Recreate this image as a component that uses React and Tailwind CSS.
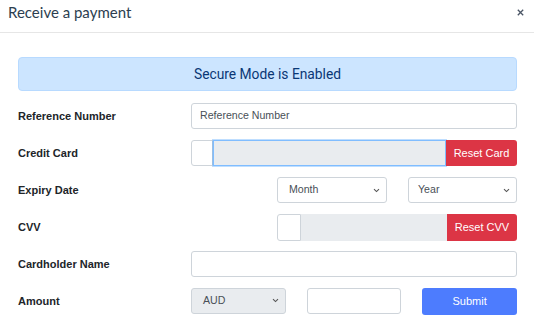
import React from "react";

const Chevron = () => (
  <svg width="7" height="5" viewBox="0 0 7 5" className="shrink-0">
    <path d="M1 1.2 L3.5 3.6 L6 1.2" fill="none" stroke="#555" strokeWidth="1.1" />
  </svg>
);

const Label = ({ children }) => (
  <div className="w-[173px] shrink-0 text-[11px] font-bold text-[#212529]">{children}</div>
);

export default function App() {
  return (
    <div
      className="w-[534px] h-[320px] bg-white overflow-hidden"
      style={{ fontFamily: "'Liberation Sans', Arial, sans-serif" }}
    >
      <div className="h-[33px] border-b border-[#e6e6e6] flex items-center justify-between pl-[8px] pr-[9px] pb-[8px]">
        <div
          className="text-[15px] text-[#2c3e50]"
          style={{ fontFamily: "Lato, 'Liberation Sans', sans-serif" }}
        >
          Receive a payment
        </div>
        <svg width="9" height="9" viewBox="0 0 9 9">
          <path d="M1.8 1.8 L7.2 7.2 M7.2 1.8 L1.8 7.2" stroke="#4a5565" strokeWidth="1.3" />
        </svg>
      </div>

      <div className="pl-[18px] pr-[17px] pt-[24px]">
        <div
          className="h-[34px] rounded-[4px] bg-[#cce5ff] border border-[#b8daff] flex items-center justify-center text-[13.8px] font-normal text-[#0a3775]"
          style={{ fontFamily: "Roboto, 'Liberation Sans', sans-serif" }}
        >
          Secure Mode is Enabled
        </div>

        <div className="mt-[12px] flex flex-col gap-[11px]">
          <div className="flex items-center h-[26px]">
            <Label>Reference Number</Label>
            <div className="flex-1 h-[26px] border border-[#ced4da] rounded-[3px] flex items-center pl-[8px] text-[10.6px] text-[#495057]">
              Reference Number
            </div>
          </div>

          <div className="flex items-center h-[26px]">
            <Label>Credit Card</Label>
            <div className="flex-1 flex h-[26px]">
              <div className="w-[22px] border border-[#ced4da] rounded-l-[3px] bg-white" />
              <div className="flex-1 bg-[#e9ecef] border border-[#80bdff] shadow-[0_0_0_1px_rgba(0,123,255,0.25)]" />
              <div className="w-[71px] bg-[#dc3545] rounded-r-[3px] flex items-center justify-center text-white text-[11px]">
                Reset Card
              </div>
            </div>
          </div>

          <div className="flex items-center h-[26px]">
            <Label>Expiry Date</Label>
            <div className="flex-1 flex justify-end gap-[21px]">
              <div className="w-[110px] h-[26px] border border-[#ced4da] rounded-[3px] flex items-center justify-between pl-[11px] pr-[6px] text-[10.6px] text-[#495057]">
                Month
                <Chevron />
              </div>
              <div className="w-[109px] h-[26px] border border-[#ced4da] rounded-[3px] flex items-center justify-between pl-[9px] pr-[6px] text-[10.6px] text-[#495057]">
                Year
                <Chevron />
              </div>
            </div>
          </div>

          <div className="flex items-center h-[26px]">
            <Label>CVV</Label>
            <div className="flex-1 flex justify-end">
              <div className="w-[240px] flex h-[27px]">
                <div className="w-[24px] border border-[#ced4da] rounded-l-[3px] bg-white" />
                <div className="flex-1 bg-[#e9ecef]" />
                <div className="w-[70px] bg-[#dc3545] rounded-r-[3px] flex items-center justify-center text-white text-[11px]">
                  Reset CVV
                </div>
              </div>
            </div>
          </div>

          <div className="flex items-center h-[26px]">
            <Label>Cardholder Name</Label>
            <div className="flex-1 h-[26px] border border-[#ced4da] rounded-[3px]" />
          </div>

          <div className="flex items-center h-[26px]">
            <Label>Amount</Label>
            <div className="flex-1 grid grid-cols-3 gap-[21px]">
              <div className="h-[26px] bg-[#e9ecef] border border-[#ced4da] rounded-[3px] flex items-center justify-between pl-[11px] pr-[6px] text-[10.6px] text-[#495057]">
                AUD
                <Chevron />
              </div>
              <div className="h-[26px] border border-[#ced4da] rounded-[3px]" />
              <div className="h-[27px] bg-[#4d7cfe] rounded-[3px] flex items-center justify-center text-white text-[11px] font-medium">
                Submit
              </div>
            </div>
          </div>
        </div>
      </div>
    </div>
  );
}
